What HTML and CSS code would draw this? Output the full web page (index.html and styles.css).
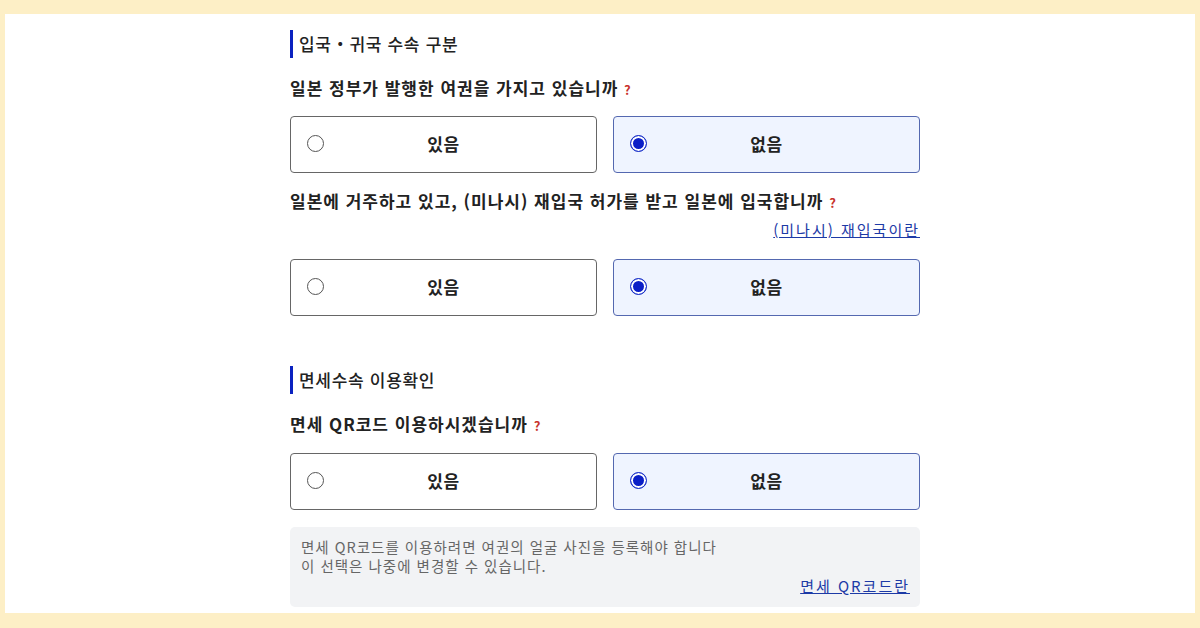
FILE: index.html
```html
<!DOCTYPE HTML>
<html lang="ko">
<head>
    <title>입국・귀국 수속</title>
    <meta name="viewport" content="width=device-width, initial-scale=1">
    <link rel="stylesheet" href="styles.css">
</head>
<body>
    <div class="frame">
        <div class="content">
            <!-- section 1 -->
            <h3 class="sec-title">입국・귀국 수속 구분</h3>

            <p class="question">일본 정부가 발행한 여권을 가지고 있습니까 <span class="req">?</span></p>
            <div class="options">
                <label class="option"><input type="radio" name="q1"><span>있음</span></label>
                <label class="option checked"><input type="radio" name="q1" checked><span>없음</span></label>
            </div>

            <p class="question q-gap">일본에 거주하고 있고, (미나시) 재입국 허가를 받고 일본에 입국합니까 <span class="req">?</span></p>
            <div class="link-row"><a href="#">(미나시) 재입국이란</a></div>
            <div class="options">
                <label class="option"><input type="radio" name="q2"><span>있음</span></label>
                <label class="option checked"><input type="radio" name="q2" checked><span>없음</span></label>
            </div>

            <!-- section 2 -->
            <h3 class="sec-title sec-gap">면세수속 이용확인</h3>

            <p class="question">면세 QR코드 이용하시겠습니까 <span class="req">?</span></p>
            <div class="options">
                <label class="option"><input type="radio" name="q3"><span>있음</span></label>
                <label class="option checked"><input type="radio" name="q3" checked><span>없음</span></label>
            </div>

            <div class="info">
                <p>면세 QR코드를 이용하려면 여권의 얼굴 사진을 등록해야 합니다<br>이 선택은 나중에 변경할 수 있습니다.</p>
                <div class="link-row"><a href="#">면세 QR코드란</a></div>
            </div>
        </div>
    </div>
</body>
</html>
```

FILE: styles.css
```css
html {font-family: "Noto Sans CJK KR", "Noto Sans", sans-serif;}
body {margin: 0; background: #fdefc6; color: #222;}
.frame {margin: 14px 5px 15px; height: 599px; background: #fff; overflow: hidden;}
.content {width: 630px; margin-left: 285px; padding-top: 16px;}

.sec-title {margin: 0; height: 28px; line-height: 27px; border-left: 3px solid #0b22c0; padding-left: 6px; font-size: 17px; font-weight: 500; letter-spacing: 0.7px; color: #222;}
.sec-gap {margin-top: 50px;}

.question {margin: 18px 0 0; line-height: 24px; font-size: 17px; font-weight: 700; letter-spacing: 1px; color: #222;}
.q-gap {margin-top: 16px;}
.req {color: #c8322c; font-size: 13px; font-weight: 700;}

.link-row {text-align: right; line-height: 20px;}
.link-row a {color: #1d3aa6; font-size: 15px; letter-spacing: 2px; text-decoration: underline;}
.question + .link-row {margin-top: 4px;}

.options {display: grid; grid-template-columns: 1fr 1fr; gap: 16px; margin-top: 14px;}
.link-row + .options {margin-top: 19px;}
.sec-gap + .question + .options {margin-top: 15px;}
.option {position: relative; display: flex; align-items: center; justify-content: center; height: 53px; padding-bottom: 2px; border: 1px solid #666; border-radius: 4px; background: #fff; font-size: 17px; font-weight: 700; letter-spacing: 0.5px; color: #222;}
.option.checked {border-color: #5468b0; background: #eff4ff;}
.option input {position: absolute; left: 16px; top: 18px; margin: 0; width: 17px; height: 17px; appearance: none; -webkit-appearance: none; border: 1px solid #555; border-radius: 50%; background: #fff;}
.option input:checked {border: 1px solid #1b33c9; background: #0b1fc7; box-shadow: inset 0 0 0 2px #fff;}

.info {margin-top: 17px; background: #f2f3f5; border-radius: 5px; padding: 10px 10px 11px 11px;}
.info p {margin: 0; font-size: 14.5px; line-height: 19px; letter-spacing: 1px; color: #666;}
.info .link-row {margin-top: 0;}
```
